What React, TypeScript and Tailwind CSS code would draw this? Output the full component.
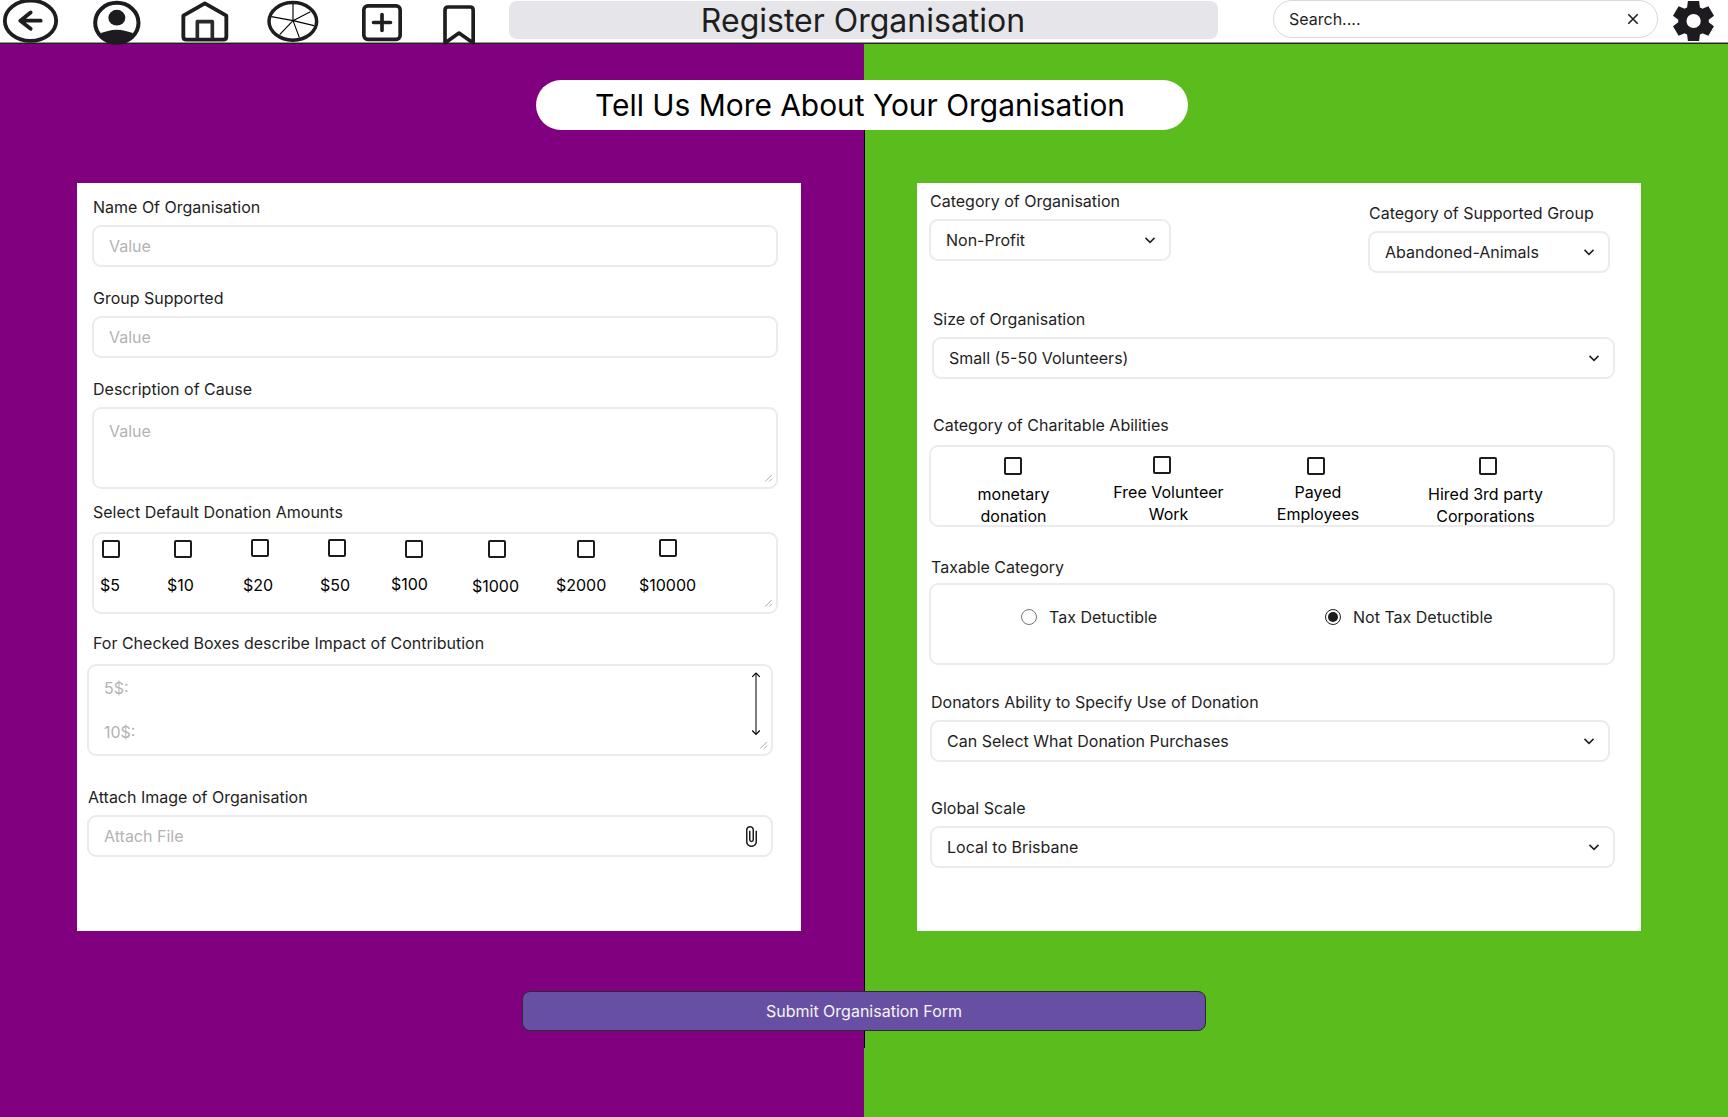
import type { ReactNode } from "react";

const INK = "#1e1e1e";

function BackIcon() {
  return (
    <svg className="h-[46px] w-[56px] shrink-0 overflow-visible" viewBox="9 0 168 138" fill="none" stroke={INK} strokeWidth="11.5" strokeLinecap="round" strokeLinejoin="round">
      <ellipse cx="91.500" cy="62" rx="77" ry="60.500" />
      <path d="M122 62H61M92 37.500L61 62L92 86.500" />
    </svg>
  );
}

function UserIcon() {
  return (
    <svg className="h-[46px] w-[48px] shrink-0 overflow-visible" viewBox="278 0 144 138" fill="none">
      <ellipse cx="349.500" cy="68.500" rx="65" ry="60" stroke="#1d1b20" strokeWidth="12" />
      <ellipse cx="349.500" cy="53" rx="25.500" ry="23.500" fill="#1d1b20" />
      <path d="M296 103Q349 76 403 103Q384 131 349.500 131Q315 131 296 103Z" fill="#1d1b20" />
    </svg>
  );
}

function HomeIcon() {
  return (
    <svg className="h-[46px] w-[48px] shrink-0" viewBox="542 0 144 138" fill="none" stroke={INK} strokeWidth="11.5" strokeLinejoin="round">
      <path d="M549 47L613.500 10L678 47V110Q678 119 668 119H559Q549 119 549 110Z" />
      <path d="M591 116V65H636V116" stroke="#2b2b2b" strokeWidth="11" />
    </svg>
  );
}

function WheelIcon() {
  return (
    <svg className="h-[46px] w-[52px] shrink-0" viewBox="800 0 156 138" fill="none" stroke={INK} strokeWidth="10.500">
      <ellipse cx="877.500" cy="64" rx="71.500" ry="56.500" />
      <path d="M878 62V12M878 62L930 35M878 62L941 77M878 62L897 112M878 62L838 104M878 62L813 50" stroke="#000" strokeWidth="3.4" />
    </svg>
  );
}

function AddIcon() {
  return (
    <svg className="h-[46px] w-[40px] shrink-0" viewBox="1086 0 120 138" fill="none" stroke={INK} strokeWidth="11" strokeLinecap="round">
      <rect x="1091.500" y="17.500" width="109" height="100.500" rx="12" />
      <path d="M1146 43.500V91.500M1120.500 67.500H1171.500" />
    </svg>
  );
}

function BookmarkIcon() {
  return (
    <svg className="h-[46px] w-[32px] shrink-0" viewBox="1329 0 96 138" fill="none" stroke={INK} strokeWidth="11" strokeLinejoin="round">
      <path d="M1335 129V30Q1335 21 1344 21H1410Q1419.500 21 1419.500 30V129L1377 99Z" />
    </svg>
  );
}

function GearIcon() {
  return (
    <svg className="ml-[15px] mt-px h-10 w-[41px] shrink-0" viewBox="78 -880 804 800" preserveAspectRatio="none" fill="#1d1b20">
      <path d="m370-80-16-128q-13-5-24.500-12T307-235l-119 50L78-375l103-78q-1-7-1-13.500v-27q0-6.500 1-13.500L78-585l110-190 119 50q11-8 23-15t24-12l16-128h220l16 128q13 5 24.500 12t22.500 15l119-50 110 190-103 78q1 7 1 13.500v27q0 6.500-2 13.500l103 78-110 190-118-50q-11 8-23 15t-24 12L590-80H370Zm112-260q58 0 99-41t41-99q0-58-41-99t-99-41q-59 0-99.500 41T342-480q0 58 40.500 99t99.500 41Z" />
    </svg>
  );
}

function Chevron() {
  return (
    <svg className="size-4 shrink-0" viewBox="0 0 16 16" fill="none" stroke={INK} strokeWidth="1.5">
      <path d="M3.500 5.900L8 10.400L12.500 5.900" />
    </svg>
  );
}

function ResizeGrip() {
  return (
    <svg className="absolute bottom-[3px] right-[2px] size-2.5" viewBox="0 0 10 10" fill="none" stroke="#a8a8a8" strokeWidth="1">
      <path d="M1.200 7.500L7.700 1M5.200 7.500L8 4.700" />
    </svg>
  );
}

function ScrollArrow() {
  return (
    <svg className="absolute right-[10px] top-[6px] h-[64px] w-[10px]" viewBox="0 0 10 64" fill="none" stroke="#000" strokeWidth="1">
      <path d="M5 1V62" stroke="#7d7d7d" strokeWidth="2" />
      <path d="M1.200 4.800L5 1L8.800 4.800M1.200 58.500L5 62.300L8.800 58.500" strokeWidth="1.200" />
    </svg>
  );
}

function PaperclipIcon() {
  return (
    <svg className="mr-[14px] h-[21px] w-[11px] shrink-0" viewBox="7 1 11 22" preserveAspectRatio="none" fill={INK}>
      <path d="M16.500 6v11.500c0 2.210-1.790 4-4 4s-4-1.790-4-4V5a2.500 2.500 0 0 1 5 0v10.500c0 .55-.45 1-1 1s-1-.45-1-1V6H10v9.500a2.500 2.500 0 0 0 5 0V5c0-2.210-1.790-4-4-4S7 2.790 7 5v12.500c0 3.040 2.460 5.500 5.500 5.500s5.500-2.460 5.500-5.500V6h-1.500z" />
    </svg>
  );
}

const FRAME = "relative rounded-[9px] border-2 border-[#ebebeb] bg-white";

function Field({ label, className, labelClass = "pl-px", children }: { label: string; className: string; labelClass?: string; children: ReactNode }) {
  return (
    <div className={`flex flex-col ${className}`}>
      <span className={`block h-[22px] whitespace-nowrap leading-[22px] ${labelClass}`}>{label}</span>
      {children}
    </div>
  );
}

function TextBox({ children }: { children: ReactNode }) {
  return <div className={`${FRAME} mt-[7px] flex h-[42px] items-center justify-between pl-[15px] text-[#b3b3b3]`}>{children}</div>;
}

function SelectBox({ value }: { value: string }) {
  return (
    <div className={`${FRAME} mt-[7px] flex h-[42px] items-center justify-between pl-[15px] pr-[11px]`}>
      <span>{value}</span>
      <Chevron />
    </div>
  );
}

function Checkbox({ className = "" }: { className?: string }) {
  return <span className={`block size-[18px] shrink-0 rounded-[2px] border-2 border-[#1d1b20] ${className}`} />;
}

const amounts = [
  { label: "$5", col: "w-[67px]", box: "ml-[2px] mt-[6px]", text: "mt-[16px]" },
  { label: "$10", col: "w-[76px]", box: "ml-[7px] mt-[6px]", text: "mt-[16px]" },
  { label: "$20", col: "w-[77px]", box: "ml-[8px] mt-[5px]", text: "mt-[17px]" },
  { label: "$50", col: "w-[71px]", box: "ml-[8px] mt-[5px]", text: "mt-[17px]" },
  { label: "$100", col: "w-[81px]", box: "ml-[14px] mt-[6px]", text: "mt-[15px]" },
  { label: "$1000", col: "w-[84px]", box: "ml-[16px] mt-[6px]", text: "mt-[17px]" },
  { label: "$2000", col: "w-[83px]", box: "ml-[21px] mt-[6px]", text: "mt-[16px]" },
  { label: "$10000", col: "w-[80px]", box: "ml-[20px] mt-[5px]", text: "mt-[17px]" },
];

const abilities = [
  { lines: ["monetary", "donation"], col: "ml-[22px] w-[120px]", box: "mt-[10px]", text: "mt-[8px] pl-px" },
  { lines: ["Free Volunteer", "Work"], col: "ml-[35px] w-[120px]", box: "mt-[9px] mr-[13px]", text: "mt-[7px] pl-px" },
  { lines: ["Payed", "Employees"], col: "ml-[30px] w-[120px]", box: "mt-[10px] mr-[4px]", text: "mt-[6px]" },
  { lines: ["Hired 3rd party", "Corporations"], col: "ml-[37px] w-[140px]", box: "mt-[10px] ml-[5px]", text: "mt-[8px] pl-px" },
];

function Header() {
  return (
    <header className="relative z-10 flex h-11 items-start border-b border-[#222] bg-white pl-[3px] shadow-[inset_0_-1px_0_#999]">
      <BackIcon />
      <div className="ml-[34px] flex"><UserIcon /></div>
      <div className="ml-[40px] flex"><HomeIcon /></div>
      <div className="ml-[38px] flex"><WheelIcon /></div>
      <div className="ml-[43px] flex"><AddIcon /></div>
      <div className="ml-[41px] flex"><BookmarkIcon /></div>
      <h1 className="ml-[34px] mt-px flex h-[38px] w-[709px] shrink-0 items-center justify-center rounded-lg bg-[#e6e5ea] pr-px pt-[2px] text-[32px] leading-none">
        Register Organisation
      </h1>
      <div className="ml-[55px] flex h-[38px] w-[385px] shrink-0 items-center justify-between rounded-full border border-[#d9d9d9] pl-[15px] pr-4">
        <span>Search....</span>
        <svg className="size-4" viewBox="0 0 16 16" stroke={INK} strokeWidth="1.600">
          <path d="M3.300 3.300L12.700 12.700M12.700 3.300L3.300 12.700" />
        </svg>
      </div>
      <GearIcon />
    </header>
  );
}

function DetailsCard() {
  return (
    <section className="flex h-[748px] w-[724px] flex-col bg-white">
      <Field label="Name Of Organisation" className="ml-[15px] mt-[13px] w-[686px]">
        <TextBox>Value</TextBox>
      </Field>
      <Field label="Group Supported" className="ml-[15px] mt-[20px] w-[686px]">
        <TextBox>Value</TextBox>
      </Field>
      <Field label="Description of Cause" className="ml-[15px] mt-[20px] w-[686px]">
        <div className={`${FRAME} mt-[7px] h-[82px] pl-[15px] pt-[11px] leading-[22px] text-[#b3b3b3]`}>
          Value
          <ResizeGrip />
        </div>
      </Field>
      <Field label="Select Default Donation Amounts" className="ml-[15px] mt-[12px] w-[686px]">
        <div className={`${FRAME} mt-[9px] flex h-[82px] pl-[6px] text-black`}>
          {amounts.map((a) => (
            <div key={a.label} className={`flex flex-col items-start ${a.col}`}>
              <Checkbox className={a.box} />
              <span className={`leading-[22px] ${a.text}`}>{a.label}</span>
            </div>
          ))}
          <ResizeGrip />
        </div>
      </Field>
      <Field label="For Checked Boxes describe Impact of Contribution" className="ml-[10px] mt-[18px] w-[686px]" labelClass="pl-[6px]">
        <div className={`${FRAME} mt-[10px] h-[92px] pl-[15px] pt-[11px] leading-[22px] text-[#b3b3b3]`}>
          <p>5$:</p>
          <p className="mt-[22px]">10$:</p>
          <ScrollArrow />
          <ResizeGrip />
        </div>
      </Field>
      <Field label="Attach Image of Organisation" className="ml-[10px] mt-[30px] w-[686px]">
        <TextBox>
          Attach File
          <PaperclipIcon />
        </TextBox>
      </Field>
    </section>
  );
}

function CategoryCard() {
  return (
    <section className="flex h-[748px] w-[724px] flex-col bg-white">
      <div className="flex items-start">
        <Field label="Category of Organisation" className="ml-[12px] mt-[7px] w-[242px]">
          <SelectBox value="Non-Profit" />
        </Field>
        <Field label="Category of Supported Group" className="ml-[197px] mt-[19px] w-[242px]">
          <SelectBox value="Abandoned-Animals" />
        </Field>
      </div>
      <Field label="Size of Organisation" className="ml-[15px] mt-[35px] w-[683px]">
        <SelectBox value="Small (5-50 Volunteers)" />
      </Field>
      <Field label="Category of Charitable Abilities" className="ml-[12px] mt-[35px] w-[686px]" labelClass="pl-[4px]">
        <div className={`${FRAME} mt-[9px] flex h-[82px] text-black`}>
          {abilities.map((a) => (
            <div key={a.lines[0]} className={`flex flex-col items-center ${a.col}`}>
              <Checkbox className={a.box} />
              <p className={`whitespace-nowrap text-center leading-[22px] ${a.text}`}>
                {a.lines[0]}
                <br />
                {a.lines[1]}
              </p>
            </div>
          ))}
        </div>
      </Field>
      <Field label="Taxable Category" className="ml-[12px] mt-[29px] w-[686px]" labelClass="pl-[2px]">
        <div className={`${FRAME} mt-[5px] flex h-[82px] items-start pt-[21px] leading-[22px]`}>
          <div className="ml-[90px] flex w-[304px] items-center gap-3">
            <span className="-mt-px block size-4 rounded-full border border-[#767676]" />
            Tax Detuctible
          </div>
          <div className="flex items-center gap-3">
            <span className="-mt-px flex size-4 items-center justify-center rounded-full border border-[#1e1e1e]">
              <span className="block size-[10px] rounded-full bg-[#1e1e1e]" />
            </span>
            Not Tax Detuctible
          </div>
        </div>
      </Field>
      <Field label="Donators Ability to Specify Use of Donation" className="ml-[13px] mt-[26px] w-[680px]">
        <SelectBox value="Can Select What Donation Purchases" />
      </Field>
      <Field label="Global Scale" className="ml-[13px] mt-[35px] w-[685px]">
        <SelectBox value="Local to Brisbane" />
      </Field>
    </section>
  );
}

export default function App() {
  return (
    <div className="flex h-[1117px] w-[1728px] flex-col overflow-hidden font-['Inter',sans-serif] text-base text-[#1e1e1e]">
      <Header />
      <main className="relative flex flex-1 flex-col bg-[linear-gradient(to_right,#800080_50%,#5abd1d_50%)]">
        <div className="absolute left-1/2 top-[60px] h-[944px] w-px bg-black" />
        <h2 className="relative ml-[536px] mt-9 flex h-[50px] w-[652px] items-center justify-center self-start rounded-full bg-white pr-[4px] pt-px text-[29.9px] leading-none text-black">
          Tell Us More About Your Organisation
        </h2>
        <div className="ml-[77px] mt-[53px] flex gap-[116px]">
          <DetailsCard />
          <CategoryCard />
        </div>
        <button type="button" className="relative ml-[522px] mt-[60px] h-10 w-[684px] rounded-lg border border-[#2c2c2c] bg-[#6750a4] text-[#f5f5f5]">
          Submit Organisation Form
        </button>
      </main>
    </div>
  );
}
